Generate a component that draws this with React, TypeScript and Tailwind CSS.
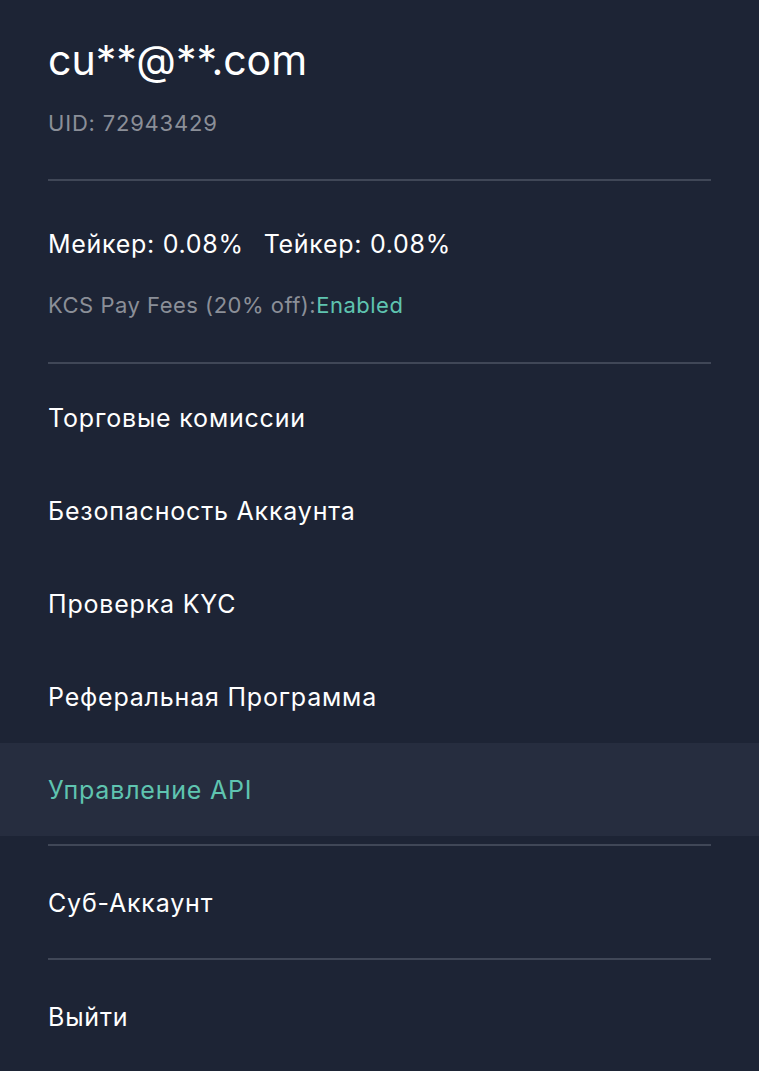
import React from 'react'

const items = [
  { label: 'Торговые комиссии' },
  { label: 'Безопасность Аккаунта' },
  { label: 'Проверка KYC' },
  { label: 'Реферальная Программа' },
  { label: 'Управление API', active: true },
]

const Divider = () => <div className="mx-12 h-[2px] bg-[#404757]" />

const App: React.FC = () => {
  return (
    <div className="min-h-[1071px] w-full bg-[#1d2435] font-['Inter',sans-serif] text-white">
      <div className="px-12 pt-[35px]">
        <h1 className="text-[41px] leading-[50px]">cu**@**.com</h1>
        <p className="mt-[25px] text-[22px] leading-[26px] tracking-[0.8px] text-[#8b8f98]">UID: 72943429</p>
      </div>
      <div className="mt-[43px]">
        <Divider />
      </div>

      <div className="px-12 pt-[48px]">
        <p className="text-[25px] leading-[30px] tracking-[0.7px]">
          Мейкер: 0.08%<span className="ml-[20px]">Тейкер: 0.08%</span>
        </p>
        <p className="mt-[33px] text-[22px] leading-[26px] tracking-[0.5px] text-[#8b8f98]">
          KCS Pay Fees (20% off):<span className="text-[#5fc4b0]">Enabled</span>
        </p>
      </div>
      <div className="mt-[44px]">
        <Divider />
      </div>

      <div className="mt-[7px]">
        {items.map(item => (
          <div
            key={item.label}
            className={`flex h-[93px] items-center px-12 pt-[3px] text-[25px] tracking-[0.8px] ${item.active ? 'bg-[#262d3f] text-[#5fc4b0]' : ''}`}
          >
            {item.label}
          </div>
        ))}
      </div>
      <div className="mt-[8px]">
        <Divider />
      </div>
      <div className="mt-[9px] flex h-[93px] items-center px-12 pt-[4px] text-[25px] tracking-[0.8px]">Суб-Аккаунт</div>
      <div className="mt-[10px]">
        <Divider />
      </div>
      <div className="mt-[9px] flex h-[93px] items-center px-12 pt-[5px] text-[25px] tracking-[0.8px]">Выйти</div>
    </div>
  )
}

export default App
